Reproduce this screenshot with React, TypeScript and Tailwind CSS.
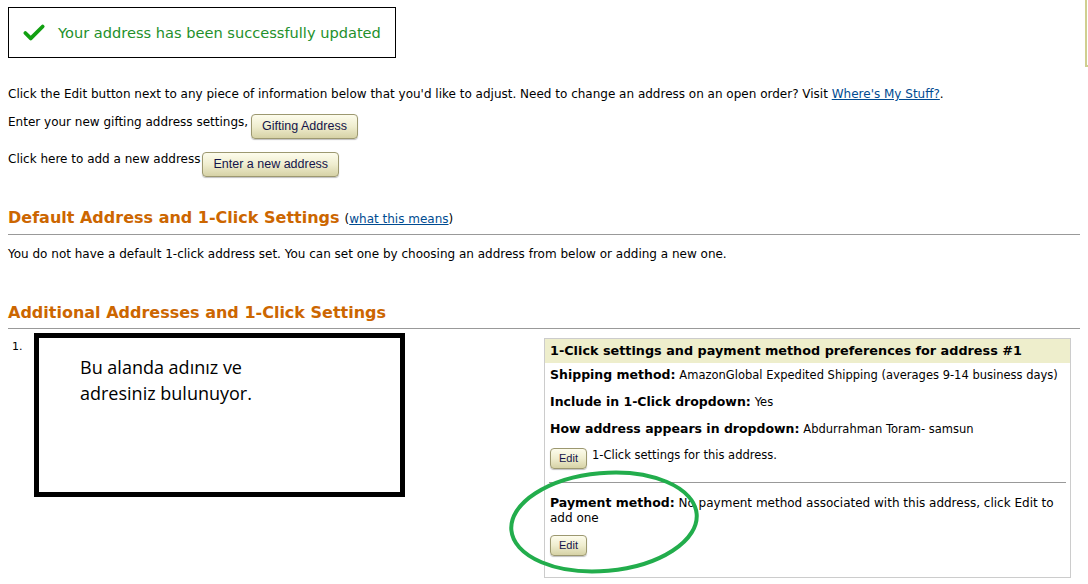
import { Check } from "lucide-react";

const ORANGE = "text-[#cc6600]";

function OldButton({ children, small }: { children: React.ReactNode; small?: boolean }) {
  return (
    <button
      className={`inline-flex items-center justify-center rounded-[4px] border border-[#9c9870] bg-gradient-to-b from-[#fdfcec] via-[#efedcf] to-[#d6d2a6] font-['Liberation_Sans',Arial,sans-serif] text-[#14144a] shadow-[0_1px_1px_rgba(0,0,0,0.25)] ${
        small ? "h-[21px] px-[8px] text-[11px]" : "h-[25px] px-[10px] text-[12.5px]"
      }`}
    >
      {children}
    </button>
  );
}

function Label({ label, children }: { label: string; children: React.ReactNode }) {
  return (
    <p className="leading-[15px]">
      <b className="text-[12.5px]">{label}</b>{" "}
      <span className="text-[11.5px]">{children}</span>
    </p>
  );
}

export default function App() {
  return (
    <div className="min-h-[584px] w-[1088px] bg-white font-['DejaVu_Sans',Verdana,sans-serif] text-[12px] text-black">
      {/* Aviso de sucesso */}
      <div className="flex items-start pl-2 pt-[7px]">
        <div className="flex h-[51px] w-[388px] items-center gap-[11px] border border-black pl-[12px]">
          <Check className="h-[26px] w-[26px] text-[#12a012]" strokeWidth={3.5} />
          <span className="text-[14.6px] text-[#23902b]">Your address has been successfully updated</span>
        </div>
        <div className="ml-auto mt-[-7px] h-[67px] w-[3px] border-b-2 border-l-2 border-[#cfcf90]" />
      </div>

      <main className="px-2">
        <p className="mt-[19px] leading-[16px]">
          Click the Edit button next to any piece of information below that you'd like to adjust. Need to change an
          address on an open order? Visit{" "}
          <a href="#" className="text-[#004b91] underline">
            Where's My Stuff?
          </a>
          .
        </p>
        <div className="mt-[12px] flex items-start gap-[3px]">
          <span className="leading-[16px]">Enter your new gifting address settings,</span>
          <OldButton>Gifting Address</OldButton>
        </div>
        <div className="mt-[12px] flex items-start gap-[2px]">
          <span className="leading-[16px]">Click here to add a new address</span>
          <div className="mt-[1px]">
            <OldButton>Enter a new address</OldButton>
          </div>
        </div>

        {/* Endereço padrão */}
        <h2 className="mt-[31px] flex items-baseline gap-[5px] border-b border-[#999] pb-[5px] leading-[20px]">
          <span className={`text-[16px] font-bold ${ORANGE}`}>Default Address and 1-Click Settings</span>
          <span className="text-[12px]">
            (<a href="#" className="text-[#004b91] underline">what this means</a>)
          </span>
        </h2>
        <p className="mt-[11px] leading-[16px]">
          You do not have a default 1-click address set. You can set one by choosing an address from below or adding a
          new one.
        </p>

        {/* Endereços adicionais */}
        <h2 className={`mt-[41px] border-b border-[#999] pb-[5px] text-[16px] font-bold leading-[20px] ${ORANGE}`}>
          Additional Addresses and 1-Click Settings
        </h2>

        <div className="relative flex items-start">
          <span className="mt-[10px] w-[26px] pl-[4px] text-[11px]">1.</span>
          <div className="mt-[4px] h-[164px] w-[371px] border-[5px] border-black pl-[41px] pt-[16px] font-['Open_Sans',sans-serif] text-[18px] leading-[26px]">
            Bu alanda adınız ve
            <br />
            adresiniz bulunuyor.
          </div>

          <div className="ml-[139px] mt-[9px] w-[527px] border border-[#cccccc] pb-[21px]">
            <div className="bg-[#eeeecc] px-[5px] py-[5px] text-[12.8px] font-bold leading-[14px]">
              1-Click settings and payment method preferences for address #1
            </div>
            <div className="flex flex-col gap-[11px] px-[5px] pt-[4px]">
              <Label label="Shipping method:">AmazonGlobal Expedited Shipping (averages 9-14 business days)</Label>
              <Label label="Include in 1-Click dropdown:">Yes</Label>
              <Label label="How address appears in dropdown:">Abdurrahman Toram- samsun</Label>
              <div className="flex items-center gap-[5px] text-[11.5px]">
                <OldButton small>Edit</OldButton>
                <span className="-mt-[5px]">1-Click settings for this address.</span>
              </div>
            </div>
            <div className="mx-[4px] mt-[13px] border-t border-[#999]" />
            <div className="px-[5px] pt-[12px]">
              <p className="text-[12px] leading-[15px]">
                <b className="text-[12.5px]">Payment method:</b> No payment method associated with this address, click
                Edit to add one
              </p>
              <div className="mt-[9px]">
                <OldButton small>Edit</OldButton>
              </div>
            </div>
          </div>

          {/* Anotação verde */}
          <svg className="pointer-events-none absolute left-[494px] top-[137px]" width="204" height="112" viewBox="0 0 204 112">
            <ellipse cx="102" cy="56" rx="93" ry="49" fill="none" stroke="#22ad4c" strokeWidth="4" transform="rotate(-5 102 56)" />
          </svg>
        </div>
      </main>
    </div>
  );
}
